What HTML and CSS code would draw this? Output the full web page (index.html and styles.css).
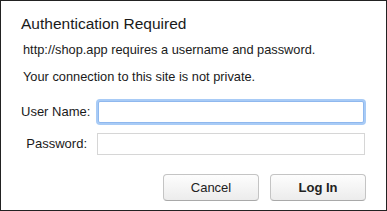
FILE: index.html
```html
<!DOCTYPE html>
<html lang="en">

<head>
    <meta charset="UTF-8">
    <meta name="viewport" content="width=device-width, initial-scale=1.0">
    <title>Authentication Required</title>
    <link rel="stylesheet" href="styles.css">
</head>

<body>
    <div class="dialog">
        <h1>Authentication Required</h1>
        <p class="msg">http://shop.app requires a username and password.</p>
        <p class="msg">Your connection to this site is not private.</p>

        <div class="form">
            <label class="row">
                <span class="label">User Name:</span>
                <input type="text" class="field focused">
            </label>
            <label class="row">
                <span class="label">Password:</span>
                <input type="password" class="field">
            </label>
        </div>

        <div class="buttons">
            <button class="btn">Cancel</button>
            <button class="btn primary">Log In</button>
        </div>
    </div>
</body>

</html>
```

FILE: styles.css
```css
* {
    margin: 0;
    padding: 0;
    box-sizing: border-box;
}

body {
    font-family: "Liberation Sans", Arial, sans-serif;
    color: #1a1a1a;
    background: #fff;
}

.dialog {
    width: 387px;
    height: 211px;
    border: 1px solid #222;
    padding: 13px 20px 0 20px;
}

h1 {
    font-size: 15.5px;
    font-weight: normal;
    line-height: 20px;
}

.msg {
    font-size: 12.8px;
    line-height: 16px;
    margin-top: 8px;
    padding-left: 2px;
}

.msg + .msg {
    margin-top: 11px;
}

.form {
    display: flex;
    flex-direction: column;
    gap: 7px;
    margin-top: 14px;
}

.row {
    display: flex;
    align-items: center;
    height: 25px;
}

.label {
    width: 66px;
    flex-shrink: 0;
    white-space: nowrap;
    text-align: right;
    font-size: 13px;
    margin-right: 10px;
}

.field {
    flex: 1;
    height: 22px;
    border: 1px solid #d6d6d6;
    margin: 0 1px 0 0;
    outline: none;
    font-size: 13px;
}

.field.focused {
    margin: 0 2px 0 1px;
    border: 1px solid #8fb8ee;
    box-shadow: 0 0 0 2px #a8cbf6;
    border-radius: 2px;
}

.buttons {
    display: flex;
    justify-content: flex-end;
    gap: 11px;
    margin-top: 18px;
}

.btn {
    width: 96px;
    height: 27px;
    font-family: "Liberation Sans", Arial, sans-serif;
    font-size: 13px;
    color: #222;
    background: linear-gradient(#fdfdfd, #ececec);
    border: 1px solid #c4c4c4;
    border-bottom-color: #a9a9a9;
    border-radius: 4px;
}

.btn.primary {
    font-weight: bold;
}
```
